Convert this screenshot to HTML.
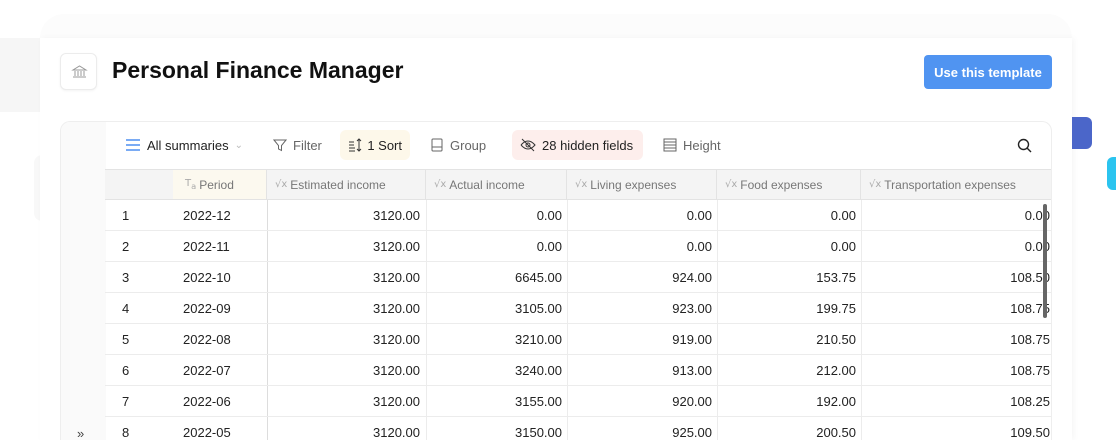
<!DOCTYPE html>
<html><head><meta charset="utf-8"><style>
*{box-sizing:border-box;margin:0;padding:0;white-space:nowrap}
html,body{width:1116px;height:440px;overflow:hidden}
body{background:#fff;font-family:"Liberation Sans",sans-serif;position:relative;color:#222}
.abs{position:absolute}
.tb{position:absolute;top:130px;height:30px;display:flex;align-items:center;font-size:13px;color:#666;gap:6px;padding:0 8px;border-radius:6px}
.hd{position:absolute;top:169px;height:31px;display:flex;align-items:center;font-size:12px;color:#777;border-right:1px solid #e3e3e3;padding-left:8px;gap:3px}
.sq{font-size:10px;color:#aaa;font-family:"DejaVu Sans",sans-serif}
.row{position:absolute;left:105px;width:946px;height:31px;border-bottom:1px solid #ececec;font-size:13px;color:#222}
.row span{position:absolute;top:8px}
</style></head><body>
<div class="abs" style="left:40px;top:14px;width:1032px;height:40px;background:#fcfcfc;border-radius:24px 24px 0 0"></div>
<div class="abs" style="left:0;top:38px;width:40px;height:74px;background:#f6f6f6"></div>
<div class="abs" style="left:34px;top:155px;width:8px;height:66px;background:#f8f8f8;border-radius:8px 0 0 8px"></div>
<div class="abs" style="left:40px;top:38px;width:1032px;height:402px;background:#fff;box-shadow:2px 0 6px rgba(0,0,0,0.04)"></div>
<div class="abs" style="left:1072px;top:117px;width:20px;height:32px;background:#4b66c9;border-radius:0 6px 6px 0"></div>
<div class="abs" style="left:1107px;top:157px;width:12px;height:33px;background:#2bc4ef;border-radius:6px 0 0 6px"></div>

<div class="abs" style="left:60px;top:53px;width:37px;height:37px;border:1px solid #ececec;border-radius:6px;background:#fff;box-shadow:0 1px 2px rgba(0,0,0,0.05)">
<svg width="37" height="37" viewBox="0 0 37 37"><g fill="none" stroke="#999" stroke-width="1"><path d="M12 16h13l-6.5-4z"/><path d="M14 17v5M17 17v5M20 17v5M23 17v5M12 23h13"/></g></svg></div>
<div class="abs" style="left:112px;top:57px;font-size:23px;font-weight:bold;color:#111">Personal Finance Manager</div>
<div class="abs" style="left:924px;top:55px;width:128px;height:34px;background:#5094f1;border-radius:4px;color:#fff;font-size:13px;font-weight:bold;display:flex;align-items:center;justify-content:center">Use this template</div>

<div class="abs" style="left:60px;top:121px;width:992px;height:319px;border:1px solid #eee;border-bottom:none;border-radius:10px 10px 0 0;background:#fff;overflow:hidden">
<div class="abs" style="left:0;top:0;width:45px;height:330px;background:#fafafa"></div>
</div>
<div class="abs" style="left:105px;top:169px;width:946px;height:31px;background:#f4f4f4;border-top:1px solid #e3e3e3;border-bottom:1px solid #e3e3e3"></div>
<div class="abs" style="left:173px;top:170px;width:94px;height:29px;background:#fcf9ef"></div>

<div class="tb" style="left:117px;color:#222"><svg width="16" height="14"><path d="M1 2h14M1 7h14M1 12h14" stroke="#4f8ff0" stroke-width="1.5"/></svg>All summaries <span style="color:#bbb;font-size:10px">&#8964;</span></div>
<div class="tb" style="left:265px"><svg width="14" height="14"><path d="M1 2h12L8.5 7.5v5l-3-1.5V7.5z" fill="none" stroke="#666"/></svg>Filter</div>
<div class="tb" style="left:340px;width:70px;background:#fdf8ea;color:#222;gap:4px"><svg width="16" height="14"><path d="M1 4h5M1 7h5M1 10h6M1 13h6M11 1v12M9 3l2-2 2 2M9 11l2 2 2-2" stroke="#333" fill="none"/></svg>1 Sort</div>
<div class="tb" style="left:422px"><svg width="14" height="14"><rect x="2" y="1" width="10" height="12" rx="1" fill="none" stroke="#666"/><path d="M2 9h10" stroke="#666"/></svg>Group</div>
<div class="tb" style="left:512px;width:131px;background:#fdeeec;color:#222"><svg width="16" height="14"><path d="M1 7q7-8 14 0q-7 8-14 0M2 1l12 12" fill="none" stroke="#333"/><circle cx="8" cy="7" r="2" fill="none" stroke="#333"/></svg>28 hidden fields</div>
<div class="tb" style="left:655px"><svg width="14" height="14"><rect x="1" y="1" width="12" height="12" fill="none" stroke="#666"/><path d="M1 4h12M1 7h12M1 10h12" stroke="#666"/></svg>Height</div>
<svg class="abs" style="left:1017px;top:138px" width="15" height="15"><circle cx="6.5" cy="6.5" r="5" fill="none" stroke="#222" stroke-width="1.4"/><path d="M10 10l4 4" stroke="#222" stroke-width="1.4"/></svg>

<div class="hd" style="left:173px;width:94px;padding-left:12px"><span class="sq">T<sub>a</sub></span>Period</div>
<div class="hd" style="left:267px;width:159px"><span class="sq">√x</span>Estimated income</div>
<div class="hd" style="left:426px;width:141px"><span class="sq">√x</span>Actual income</div>
<div class="hd" style="left:567px;width:150px"><span class="sq">√x</span>Living expenses</div>
<div class="hd" style="left:717px;width:144px"><span class="sq">√x</span>Food expenses</div>
<div class="hd" style="left:861px;width:190px;border-right:none"><span class="sq">√x</span>Transportation expenses</div>

<div class="abs" style="left:267px;top:200px;width:1px;height:240px;background:#ddd"></div>
<div class="abs" style="left:426px;top:200px;width:1px;height:240px;background:#ececec"></div>
<div class="abs" style="left:567px;top:200px;width:1px;height:240px;background:#ececec"></div>
<div class="abs" style="left:717px;top:200px;width:1px;height:240px;background:#ececec"></div>
<div class="abs" style="left:861px;top:200px;width:1px;height:240px;background:#ececec"></div>

<div id="rows"></div>
<script>
var d=[["2022-12","3120.00","0.00","0.00","0.00","0.00"],["2022-11","3120.00","0.00","0.00","0.00","0.00"],["2022-10","3120.00","6645.00","924.00","153.75","108.50"],["2022-09","3120.00","3105.00","923.00","199.75","108.75"],["2022-08","3120.00","3210.00","919.00","210.50","108.75"],["2022-07","3120.00","3240.00","913.00","212.00","108.75"],["2022-06","3120.00","3155.00","920.00","192.00","108.25"],["2022-05","3120.00","3150.00","925.00","200.50","109.50"]];
var R=[420,562,712,856,1050],h="";
d.forEach(function(r,i){var t=200+i*31;h+='<div class="row" style="top:'+t+'px"><span style="left:17px">'+(i+1)+'</span><span style="left:78px">'+r[0]+'</span>';
for(var j=1;j<6;j++){h+='<span style="right:'+(1051-R[j-1])+'px">'+r[j]+'</span>';}
h+='</div>';});
document.getElementById("rows").innerHTML=h;
</script>
<div class="abs" style="left:1043px;top:204px;width:4px;height:114px;background:#666;border-radius:2px"></div>
<div class="abs" style="left:77px;top:426px;font-size:13px;color:#444">»</div>
</body></html>
